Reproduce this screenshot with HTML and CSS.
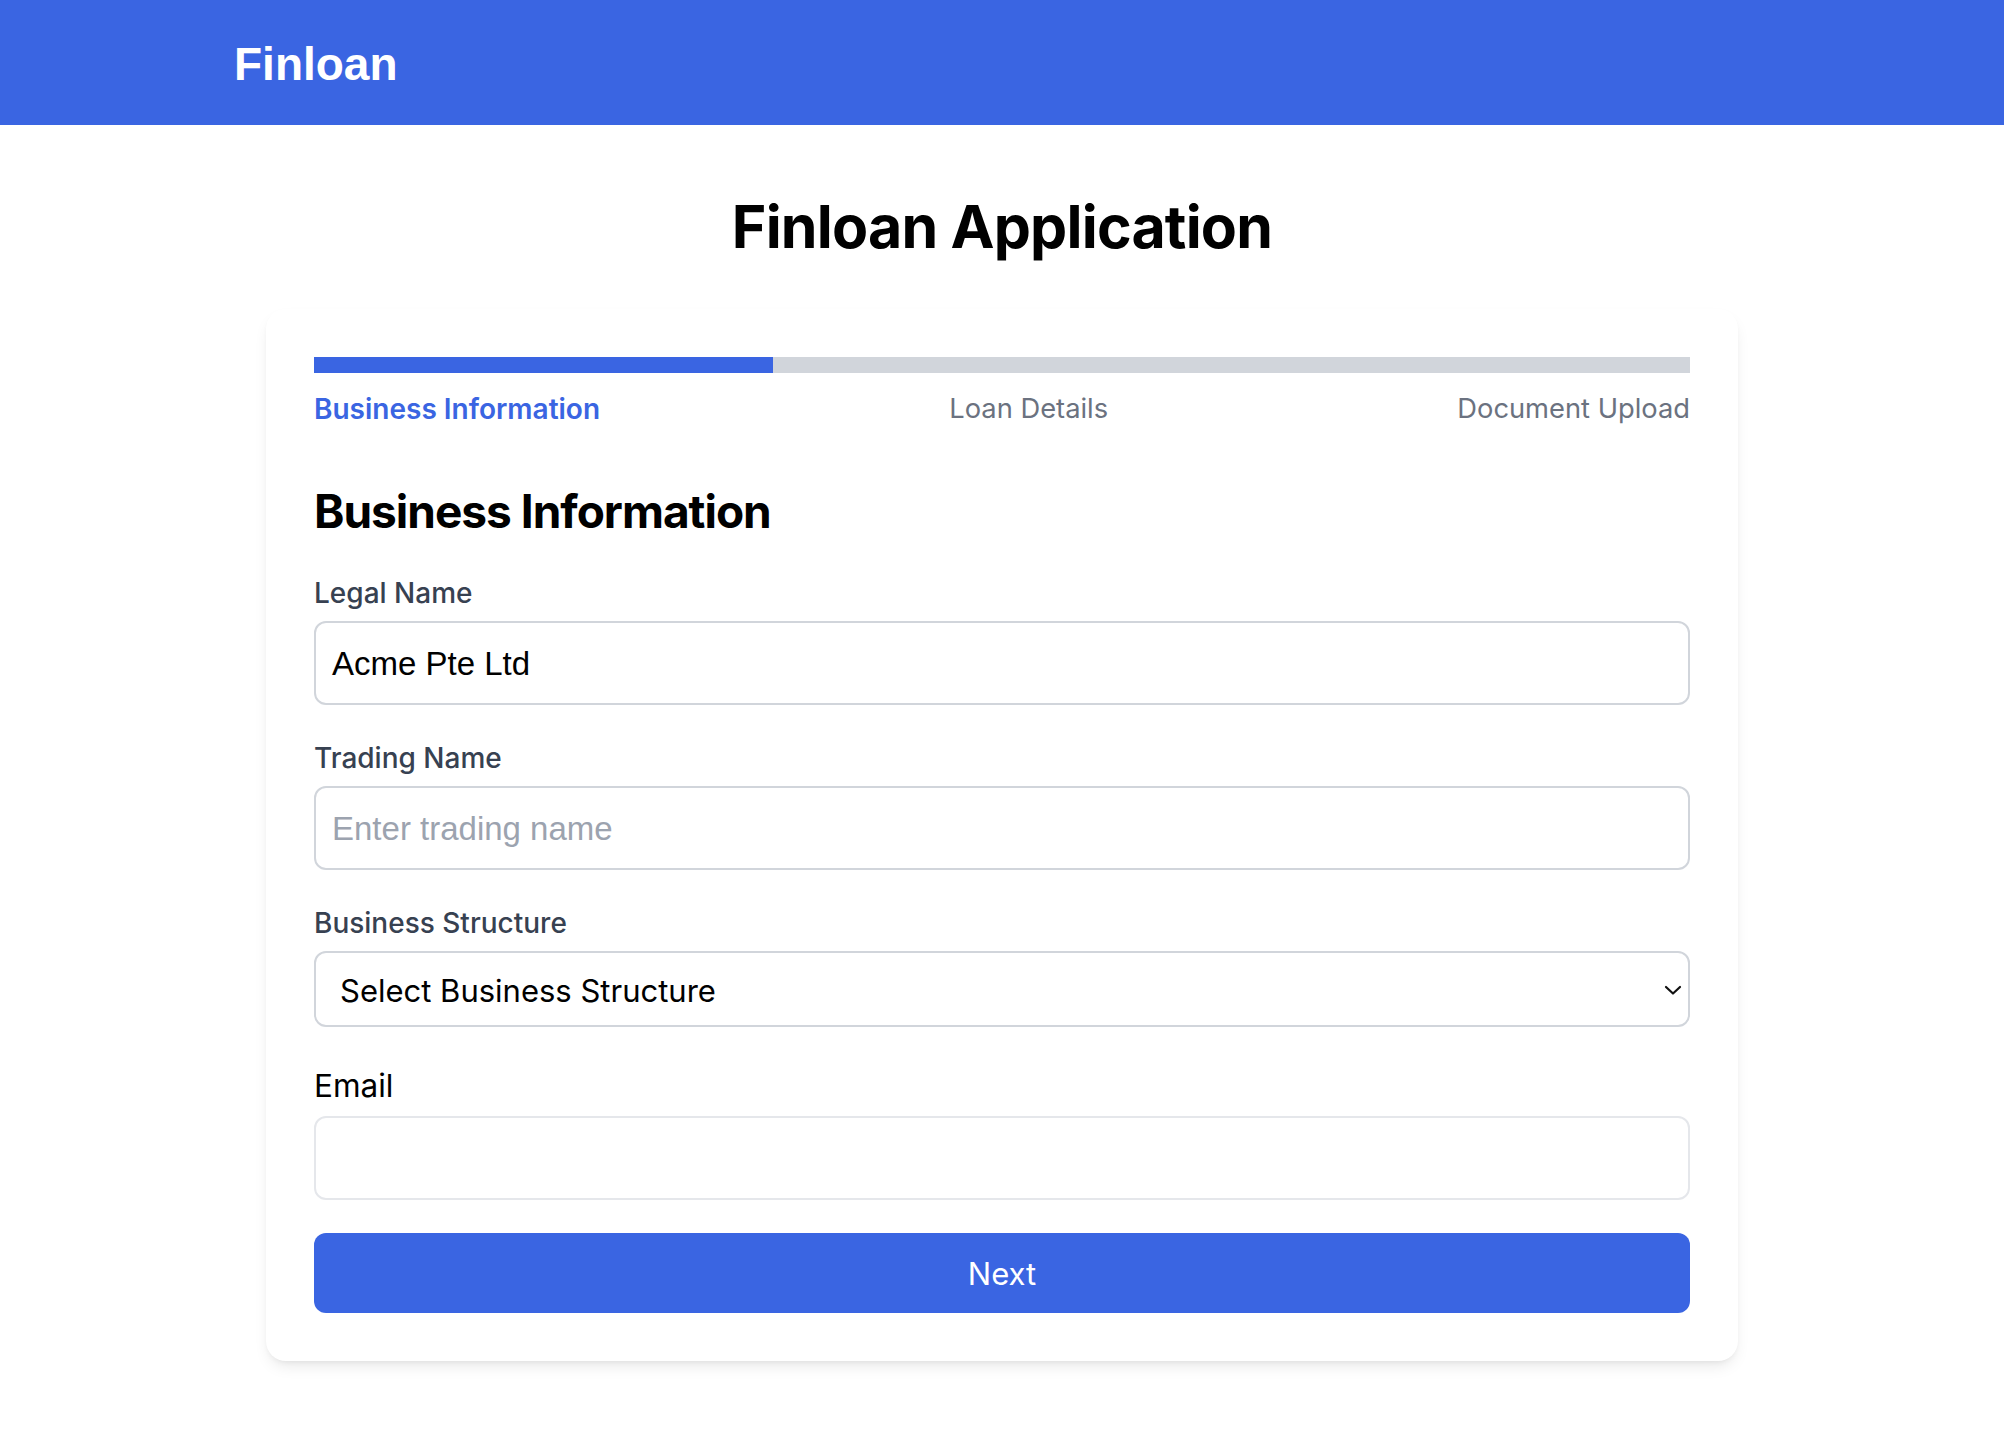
FILE: index.html
```html
<!DOCTYPE html>
<html lang="en">
<head>
<meta charset="utf-8">
<title>Finloan Application</title>
<link rel="stylesheet" href="styles.css">
</head>
<body>
<header class="topbar">
  <div class="topbar-inner">
    <div class="logo">Finloan</div>
  </div>
</header>
<main class="page">
  <h1 class="title">Finloan Application</h1>
  <div class="card-wrap">
    <section class="card">
      <div class="progress"><div class="progress-fill" style="width:33.333%"></div></div>
      <div class="steps">
        <span class="step active">Business Information</span>
        <span class="step">Loan Details</span>
        <span class="step">Document Upload</span>
      </div>
      <h2 class="section-title">Business Information</h2>
      <form class="form">
        <div class="field">
          <label class="label">Legal Name</label>
          <div class="input filled">Acme Pte Ltd</div>
        </div>
        <div class="field">
          <label class="label">Trading Name</label>
          <div class="input placeholder">Enter trading name</div>
        </div>
        <div class="field">
          <label class="label">Business Structure</label>
          <div class="select">
            <span>Select Business Structure</span>
            <svg class="chev" width="18" height="12" viewBox="0 0 18 12"><path d="M2 3 L9 9.5 L16 3" fill="none" stroke="#111" stroke-width="2.2" stroke-linecap="round" stroke-linejoin="round"/></svg>
          </div>
        </div>
        <div class="field">
          <label class="label plain">Email</label>
          <div class="input light"></div>
        </div>
        <div class="button">Next</div>
      </form>
    </section>
  </div>
</main>
</body>
</html>
```

FILE: styles.css
```css
* { box-sizing: border-box; }
html, body { margin: 0; padding: 0; background: #ffffff; }
body { font-family: Inter, "Noto Sans", sans-serif; color: #000; }

.topbar { background: #3a65e2; height: 125px; }
.topbar-inner { width: 1536px; margin: 0 auto; height: 100%; display: flex; align-items: center; }
.logo { font-family: "Liberation Sans", Arial, sans-serif; font-weight: 700; font-size: 46px; color: #fff; line-height: 1; margin-top: 2px; }

.page { display: flex; flex-direction: column; align-items: center; padding-top: 66px; padding-bottom: 60px; }
.title { margin: 0; font-size: 59px; line-height: 72px; font-weight: 700; letter-spacing: -0.8px; }

.card-wrap { width: 1536px; padding: 0 32px; margin-top: 46px; }
.card { background: #fff; border-radius: 20px; padding: 48px; box-shadow: 0 8px 16px -4px rgba(0,0,0,0.10), 0 3px 6px -3px rgba(0,0,0,0.08); }

.progress { height: 16px; background: #d1d5db; }
.progress-fill { height: 100%; background: #3a65e2; }

.steps { display: flex; justify-content: space-between; margin-top: 16px; font-size: 27.3px; line-height: 40px; color: #6b7280; }
.step.active { color: #3a65e2; font-weight: 600; font-size: 28px; }

.section-title { margin: 50px 0 0; font-size: 46px; line-height: 64px; font-weight: 700; letter-spacing: -1px; }

.form { display: flex; flex-direction: column; gap: 33px; margin-top: 30px; }
.field { display: flex; flex-direction: column; gap: 8px; }
.label { font-size: 28px; line-height: 40px; font-weight: 500; color: #374151; }
.label.plain { font-size: 31.5px; font-weight: 400; color: #000; line-height: 44px; margin-top: 4px; }

.input { height: 84px; border: 2px solid #d1d5db; border-radius: 12px; padding: 2px 16px 0; display: flex; align-items: center; font-family: "Liberation Sans", Arial, sans-serif; font-size: 33px; }
.input.filled { color: #000; }
.input.placeholder { color: #9ca3af; }
.input.light { border-color: #e5e7eb; }

.select { height: 76px; border: 2px solid #d1d5db; border-radius: 12px; padding: 2px 6px 0 24px; display: flex; align-items: center; justify-content: space-between; font-size: 31px; color: #000; }
.chev { margin-top: 0; }

.button { height: 80px; background: #3a65e2; color: #fff; border-radius: 12px; display: flex; align-items: center; justify-content: center; font-size: 31px; font-weight: 400; }
```
